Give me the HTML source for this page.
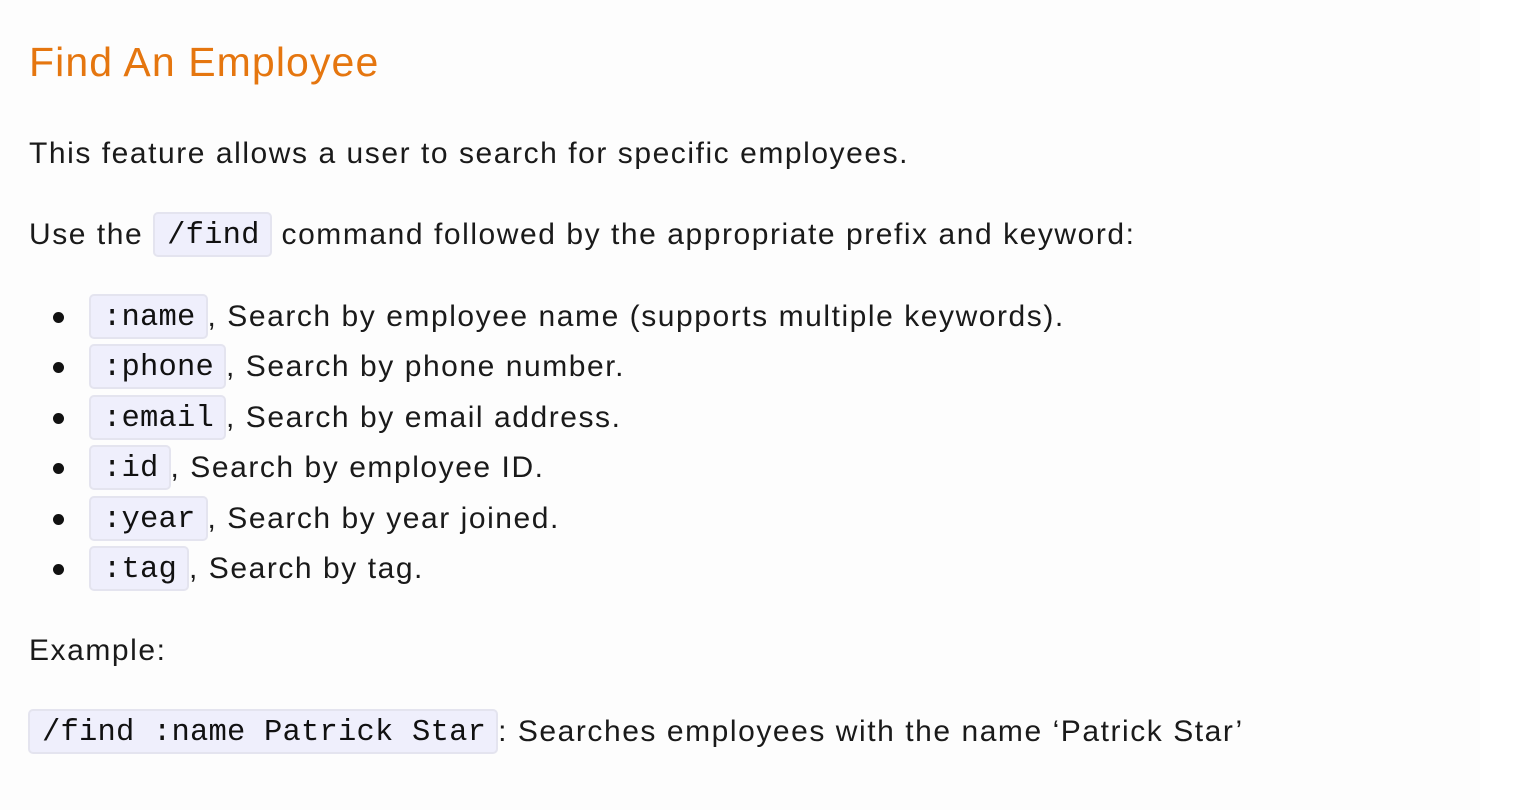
<!DOCTYPE html>
<html><head><style>
html,body{margin:0;padding:0;width:1514px;height:810px;overflow:hidden;background:#fff}
.page{position:absolute;left:0;top:0;width:1480px;height:810px;background:#fdfdfd}
.l{position:absolute;white-space:nowrap;font-family:"Liberation Sans",sans-serif;font-size:30px;letter-spacing:1.55px;color:#1a1a1a;line-height:46px}
h1{position:absolute;left:29px;top:36px;margin:0;font-family:"Liberation Sans",sans-serif;font-weight:normal;font-size:41px;letter-spacing:1.1px;color:#e5760f;line-height:52px;white-space:nowrap}
code{font-family:"Liberation Mono",monospace;font-size:30.5px;letter-spacing:0.2px;background:#efeffc;border:2px solid #e4e4ef;border-radius:5px;padding:3px 10px 0 12px;display:inline-block;line-height:38px;color:#111;vertical-align:top}
.b{position:absolute;left:53px;width:11px;height:11px;border-radius:50%;background:#111}
</style></head><body><div class="page">
<h1>Find An Employee</h1>
<div class="l" style="left:29px;top:131px">This feature allows a user to search for specific employees.</div>
<div class="l" style="left:29px;top:212px">Use the <code>/find</code> command followed by the appropriate prefix and keyword:</div>
<div class="b" style="top:312px"></div>
<div class="l" style="left:89px;top:294px"><code>:name</code>, Search by employee name (supports multiple keywords).</div>
<div class="b" style="top:362px"></div>
<div class="l" style="left:89px;top:344px"><code>:phone</code>, Search by phone number.</div>
<div class="b" style="top:413px"></div>
<div class="l" style="left:89px;top:395px"><code>:email</code>, Search by email address.</div>
<div class="b" style="top:463px"></div>
<div class="l" style="left:89px;top:445px"><code>:id</code>, Search by employee ID.</div>
<div class="b" style="top:514px"></div>
<div class="l" style="left:89px;top:496px"><code>:year</code>, Search by year joined.</div>
<div class="b" style="top:564px"></div>
<div class="l" style="left:89px;top:546px"><code>:tag</code>, Search by tag.</div>
<div class="l" style="left:29px;top:628px">Example:</div>
<div class="l" style="left:28px;top:709px"><code>/find :name Patrick Star</code>: Searches employees with the name ‘Patrick Star’</div>
</div></body></html>
